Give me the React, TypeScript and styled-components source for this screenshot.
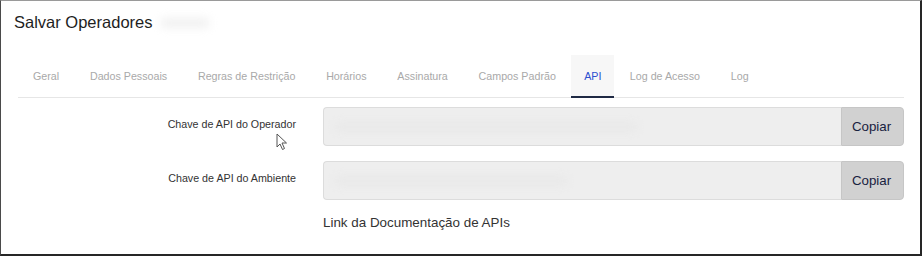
import React from "react";
import styled, { createGlobalStyle } from "styled-components";

const Global = createGlobalStyle`
  html, body { margin: 0; padding: 0; background: #fff; }
  body { font-family: "Liberation Sans", Arial, sans-serif; }
  * { box-sizing: border-box; }
`;

const Frame = styled.div`
  position: relative;
  width: 922px;
  height: 256px;
  background: #fff;
  border-left: 1px solid #4a4a4a;
  border-top: 1px solid #9a9a9a;
  border-right: 2px solid #262626;
  border-bottom: 2px solid #262626;
  padding: 0 16px 0 17px;
  overflow: hidden;
`;

const TitleRow = styled.div`
  display: flex;
  align-items: center;
  gap: 8px;
  height: 45px;
  padding: 0 0 2px 0;
  margin-left: -4px;
`;

const Title = styled.h1`
  margin: 0;
  font-size: 16.5px;
  font-weight: 400;
  color: #1e1e1e;
`;

const Blur = styled.div<{ $w: number; $h: number; $c: string }>`
  width: ${(p) => p.$w}px;
  height: ${(p) => p.$h}px;
  background: ${(p) => p.$c};
  filter: blur(4px);
  border-radius: 3px;
`;

const TabBar = styled.div`
  display: flex;
  margin-top: 9px;
  border-bottom: 1px solid #e6e6e6;
  height: 43px;
`;

const Tab = styled.div<{ $active?: boolean }>`
  display: flex;
  align-items: center;
  padding: 0 ${(p) => (p.$active ? "13px" : "15.4px")};
  font-size: 10.7px;
  color: ${(p) => (p.$active ? "#2d4fd0" : "#a9a9a9")};
  background: ${(p) => (p.$active ? "#f7f7f7" : "transparent")};
  border-bottom: 2px solid ${(p) => (p.$active ? "#1f2a44" : "transparent")};
  margin-bottom: -1px;
  white-space: nowrap;

  &:first-child {
    padding-left: 15px;
  }
`;

const Form = styled.div`
  display: grid;
  grid-template-columns: 278px 1fr;
  column-gap: 27px;
  row-gap: 15px;
  margin-top: 9px;
  align-items: center;
`;

const Label = styled.div`
  text-align: right;
  font-size: 10.7px;
  color: #333;
  padding-bottom: 6px;
`;

const Group = styled.div`
  display: flex;
  height: 39px;
`;

const Field = styled.div`
  flex: 1;
  display: flex;
  align-items: center;
  padding-left: 12px;
  background: #eeeeee;
  border: 1px solid #dcdcdc;
  border-right: none;
  border-radius: 4px 0 0 4px;
`;

const CopyButton = styled.button`
  width: 63px;
  background: #d1d1d1;
  border: 1px solid #c6c6c6;
  border-radius: 0 4px 4px 0;
  font-family: "Liberation Sans", Arial, sans-serif;
  font-size: 13.3px;
  color: #18223f;
  padding: 0 2px 0 0;
`;

const DocLink = styled.div`
  grid-column: 2;
  font-size: 13.4px;
  color: #333;
  margin-top: 0;
`;

const Cursor = styled.svg`
  position: absolute;
  left: 275px;
  top: 132px;
`;

const tabs = [
  "Geral",
  "Dados Pessoais",
  "Regras de Restrição",
  "Horários",
  "Assinatura",
  "Campos Padrão",
  "API",
  "Log de Acesso",
  "Log",
];

export default function App() {
  return (
    <>
      <Global />
      <Frame>
        <TitleRow>
          <Title>Salvar Operadores</Title>
          <Blur $w={48} $h={10} $c="#f1f1f1" />
        </TitleRow>
        <TabBar>
          {tabs.map((t) => (
            <Tab key={t} $active={t === "API"}>
              {t}
            </Tab>
          ))}
        </TabBar>
        <Form>
          <Label>Chave de API do Operador</Label>
          <Group>
            <Field>
              <Blur $w={300} $h={8} $c="#e8e8e8" />
            </Field>
            <CopyButton>Copiar</CopyButton>
          </Group>
          <Label>Chave de API do Ambiente</Label>
          <Group>
            <Field>
              <Blur $w={230} $h={8} $c="#e8e8e8" />
            </Field>
            <CopyButton>Copiar</CopyButton>
          </Group>
          <DocLink>Link da Documentação de APIs</DocLink>
        </Form>
        <Cursor width="13" height="18" viewBox="0 0 13 18">
          <path
            d="M1 1 L1 14 L4 11 L6.5 16.5 L8.5 15.5 L6 10 L10.5 10 Z"
            fill="#fff"
            stroke="#555"
            strokeWidth="1"
            strokeLinejoin="round"
          />
        </Cursor>
      </Frame>
    </>
  );
}
